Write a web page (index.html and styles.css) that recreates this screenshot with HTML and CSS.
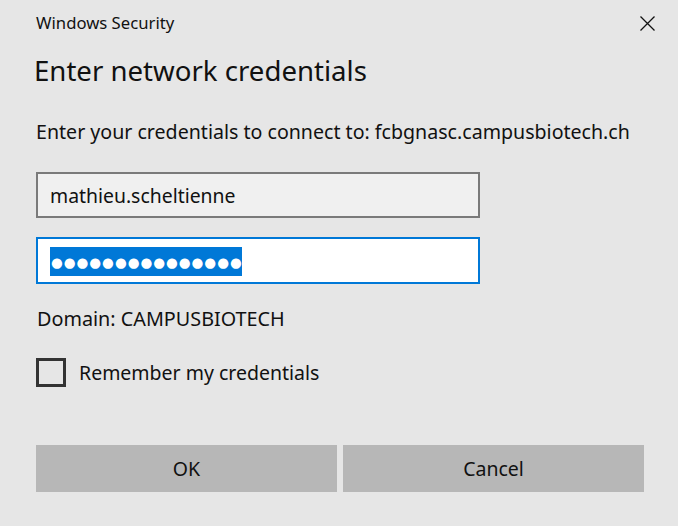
FILE: index.html
```html
<!DOCTYPE html>
<html>
<head>
<meta charset="utf-8">
<link rel="stylesheet" href="styles.css">
</head>
<body>
<div class="dialog">
  <div class="titlebar">
    <span class="app-title">Windows Security</span>
    <svg class="close" width="15" height="15" viewBox="0 0 15 15"><path d="M0.5 0.5L14.5 14.5M14.5 0.5L0.5 14.5" stroke="#111" stroke-width="1.3" fill="none"/></svg>
  </div>
  <h1 class="heading">Enter network credentials</h1>
  <p class="prompt">Enter your credentials to connect to: fcbgnasc.campusbiotech.ch</p>
  <div class="field field-user"><span class="value">mathieu.scheltienne</span></div>
  <div class="field field-pass"><span class="selection">●●●●●●●●●●●●●●●</span></div>
  <p class="domain">Domain: CAMPUSBIOTECH</p>
  <label class="remember"><span class="checkbox"></span><span>Remember my credentials</span></label>
  <div class="buttons">
    <button class="btn">OK</button>
    <button class="btn">Cancel</button>
  </div>
</div>
</body>
</html>
```
FILE: styles.css
```css
html, body {
  margin: 0;
  padding: 0;
  background: #e6e6e6;
}
body {
  font-family: "Noto Sans", "Open Sans", sans-serif;
  color: #111;
  width: 678px;
  height: 526px;
  overflow: hidden;
}
.dialog {
  padding: 0 34px 0 36px;
}
.titlebar {
  display: flex;
  justify-content: space-between;
  align-items: center;
  height: 46px;
  margin-right: -11px;
}
.app-title {
  font-size: 16.7px;
  margin-top: -1px;
}
.close {
  display: block;
}
.heading {
  margin: 6px 0 0 -2px;
  font-size: 27.6px;
  font-weight: 400;
  line-height: 36px;
}
.prompt {
  margin: 31px 0 0 0;
  font-size: 19.6px;
  line-height: 26px;
}
.field {
  box-sizing: border-box;
  width: 444px;
  height: 46px;
  border: 2px solid #7a7a7a;
  background: #f0f0f0;
  display: flex;
  align-items: center;
  padding-left: 12px;
  font-size: 19.4px;
}
.field-user {
  margin-top: 27px;
}
.field-pass {
  margin-top: 19px;
  border-color: #0078d7;
  background: #fff;
  height: 47px;
}
.selection {
  background: #0078d7;
  color: #fff;
  font-family: "DejaVu Sans", sans-serif;
  font-size: 13.5px;
  height: 29px;
  width: 192px;
  display: flex;
  align-items: center;
  letter-spacing: 1px;
  padding-left: 1px;
  box-sizing: border-box;
  margin-top: 2px;
  white-space: nowrap;
  overflow: hidden;
}
.domain {
  margin: 22px 0 0 1px;
  font-size: 19.8px;
  line-height: 26px;
}
.remember {
  display: flex;
  align-items: center;
  gap: 13px;
  margin-top: 26px;
  font-size: 19.5px;
}
.checkbox {
  box-sizing: border-box;
  width: 30px;
  height: 29px;
  border: 3px solid #333;
}
.buttons {
  display: flex;
  gap: 6px;
  margin-top: 58px;
  width: 608px;
}
.btn {
  flex: 1;
  height: 47px;
  border: none;
  background: #b7b7b7;
  font-family: inherit;
  font-size: 19.5px;
  color: #111;
  padding: 0;
}
```
